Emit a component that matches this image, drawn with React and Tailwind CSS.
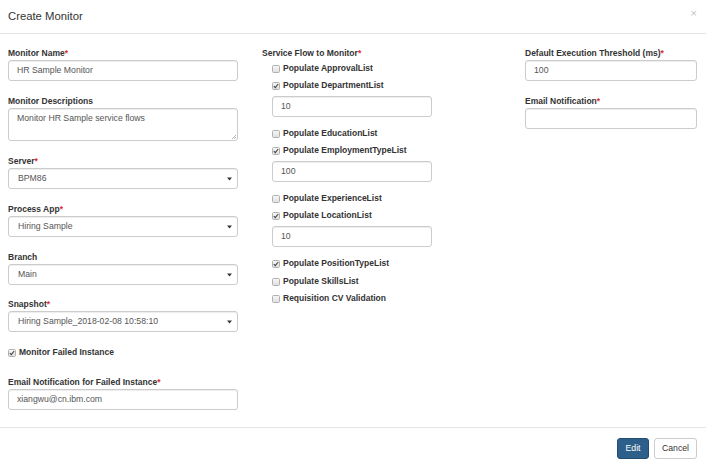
const Req = () => <span className="text-[#e0282e]">*</span>;

function Label({ children, req }) {
  return (
    <div className="h-[12px] leading-[14px] mb-[2px] text-[8.5px] font-bold text-[#333]">
      {children}
      {req && <Req />}
    </div>
  );
}

function TextInput({ value, w = 'w-full' }) {
  return (
    <div className={`${w} h-[21px] border border-[#ccc] rounded-[3px] bg-white shadow-[inset_0_1px_1px_rgba(0,0,0,0.075)] pl-[8px] flex items-center text-[8.7px] text-[#555]`}>
      {value}
    </div>
  );
}

function Select({ value }) {
  return (
    <div className="w-full h-[21px] border border-[#ccc] rounded-[3px] bg-white shadow-[inset_0_1px_1px_rgba(0,0,0,0.075)] pl-[9px] pr-[4px] flex items-center justify-between text-[8.7px] text-[#555]">
      <span>{value}</span>
      <svg width="5" height="4" viewBox="0 0 5 4" className="mr-[1px]">
        <path d="M0 0.5 L5 0.5 L2.5 3.5 Z" fill="#333" />
      </svg>
    </div>
  );
}

function Check({ checked, children }) {
  return (
    <div className="h-[17px] flex items-center">
      <span className="w-[8px] h-[8px] rounded-[1.5px] border border-[#b0b0b0] bg-gradient-to-b from-[#f6f6f6] to-[#e0e0e0] flex items-center justify-center shrink-0">
        {checked && (
          <svg width="6" height="6" viewBox="0 0 6 6">
            <path d="M0.8 3.2 L2.3 4.7 L5.2 1" stroke="#444" strokeWidth="1.1" fill="none" />
          </svg>
        )}
      </span>
      <span className="ml-[3px] text-[8.5px] font-bold text-[#333]">{children}</span>
    </div>
  );
}

export default function App() {
  return (
    <div className="w-[706px] h-[466px] bg-white overflow-hidden" style={{ fontFamily: '"Liberation Sans", Arial, sans-serif' }}>
      <div className="h-[34px] border-b border-[#e5e5e5] flex items-center justify-between pl-[8px] pr-[9px]">
        <span className="text-[11.3px] text-[#333] mt-[-1px]">Create Monitor</span>
        <span className="text-[11px] text-[#c4c4c4] mt-[-6px]">×</span>
      </div>

      <div className="h-[394px] border-b border-[#e5e5e5] flex pt-[12px]">
        <div className="w-[230px] ml-[8px]">
          <Label req>Monitor Name</Label>
          <TextInput value="HR Sample Monitor" />
          <div className="mt-[13px]">
            <Label>Monitor Descriptions</Label>
            <div className="relative h-[33px] border border-[#ccc] rounded-[3px] shadow-[inset_0_1px_1px_rgba(0,0,0,0.075)] pl-[8px] pt-[3px] text-[8.7px] text-[#555]">
              Monitor HR Sample service flows
              <svg width="5" height="5" viewBox="0 0 5 5" className="absolute right-[1px] bottom-[1px]">
                <path d="M1 5 L5 1 M3 5 L5 3" stroke="#999" strokeWidth="0.7" />
              </svg>
            </div>
          </div>
          <div className="mt-[13px]">
            <Label req>Server</Label>
            <Select value="BPM86" />
          </div>
          <div className="mt-[13px]">
            <Label req>Process App</Label>
            <Select value="Hiring Sample" />
          </div>
          <div className="mt-[13px]">
            <Label>Branch</Label>
            <Select value="Main" />
          </div>
          <div className="mt-[12px]">
            <Label req>Snapshot</Label>
            <Select value="Hiring Sample_2018-02-08 10:58:10" />
          </div>
          <div className="mt-[12px]">
            <Check checked>Monitor Failed Instance</Check>
          </div>
          <div className="mt-[14px]">
            <Label req>Email Notification for Failed Instance</Label>
            <TextInput value="xiangwu@cn.ibm.com" />
          </div>
        </div>

        <div className="w-[170px] ml-[24px]">
          <Label req>Service Flow to Monitor</Label>
          <div className="pl-[10px]">
            <Check>Populate ApprovalList</Check>
            <Check checked>Populate DepartmentList</Check>
            <div className="mt-[2px]"><TextInput value="10" w="w-[160px]" /></div>
            <div className="mt-[8px]"><Check>Populate EducationList</Check></div>
            <Check checked>Populate EmploymentTypeList</Check>
            <div className="mt-[2px]"><TextInput value="100" w="w-[160px]" /></div>
            <div className="mt-[8px]"><Check>Populate ExperienceList</Check></div>
            <Check checked>Populate LocationList</Check>
            <div className="mt-[2px]"><TextInput value="10" w="w-[160px]" /></div>
            <div className="mt-[8px]"><Check checked>Populate PositionTypeList</Check></div>
            <div className="mt-[1px]"><Check>Populate SkillsList</Check></div>
            <Check>Requisition CV Validation</Check>
          </div>
        </div>

        <div className="w-[172px] ml-[93px]">
          <Label req>Default Execution Threshold (ms)</Label>
          <TextInput value="100" />
          <div className="mt-[13px]">
            <Label req>Email Notification</Label>
            <TextInput value="" />
          </div>
        </div>
      </div>

      <div className="flex justify-end gap-[5px] pr-[9px] pt-[10px]">
        <div className="h-[21px] w-[32px] rounded-[3px] bg-[#2d5f8b] border border-[#234d73] text-white text-[8.7px] flex items-center justify-center">Edit</div>
        <div className="h-[21px] w-[43px] rounded-[3px] bg-white border border-[#ccc] text-[#333] text-[8.7px] flex items-center justify-center">Cancel</div>
      </div>
    </div>
  );
}
